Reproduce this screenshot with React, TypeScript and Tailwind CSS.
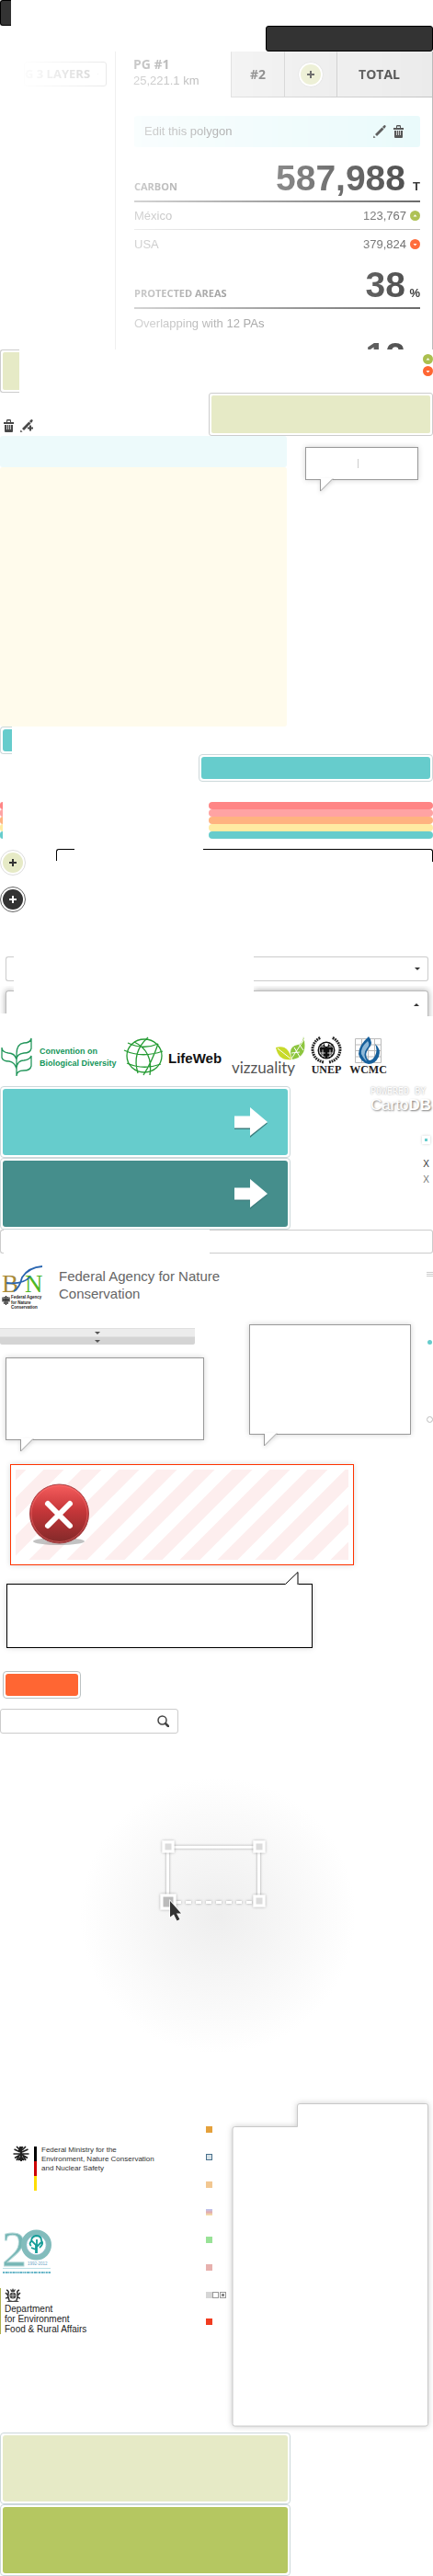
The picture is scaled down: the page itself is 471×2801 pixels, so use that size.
import React from "react";

const stripes = [0, 1, 2, 3, 4, 5, 6, 7, 8, 9, 10, 11];

function Plus({ dark = false }: { dark?: boolean }) {
  return (
    <button
      aria-label="Add"
      className={
        dark
          ? "size-7 rounded-full border border-[#666] bg-white p-0.5"
          : "size-7 rounded-full border border-[#ddd] bg-white p-0.5"
      }
    >
      <svg viewBox="0 0 22 22" className="size-full">
        <circle cx="11" cy="11" r="11" fill={dark ? "#333" : "#e6eac6"} />
        <path d="M7 11h8M11 7v8" stroke={dark ? "#fff" : "#333"} strokeWidth="2" />
      </svg>
    </button>
  );
}

function Trend({ up = false }: { up?: boolean }) {
  return (
    <svg viewBox="0 0 11 11" className="size-[11px] shrink-0">
      <circle cx="5.5" cy="5.5" r="5.5" fill={up ? "#abbf4e" : "#ff6633"} />
      <path d={up ? "M3.5 6.5h4L5.5 4.3z" : "M3.5 5h4L5.5 7.2z"} fill="#fff" />
    </svg>
  );
}

function Trash() {
  return (
    <svg viewBox="0 0 11 14" className="h-3.5 w-[11px]" fill="#484848">
      <path d="M0 3h11v2H0zM3 3V1.2Q3 0 4.200 0h2.600Q8 0 8 1.200V3H7V1.500H4V3zM1 6h9v7q0 1-1 1H2q-1 0-1-1z" />
      <path d="M3.500 6v5M5.500 6v5M7.500 6v5" stroke="#fff" strokeWidth=".7" />
    </svg>
  );
}

function Pencil({ add = false }: { add?: boolean }) {
  return (
    <svg viewBox="0 0 14 14" className="size-3.5" fill="#484848">
      <path d="M2 10 9.500 2.500l2 2L4 12zM10 2l1.500-1.500q1-.8 1.800 0t0 1.800L12 4zM.5 11.500l2 2L0 14z" />
      {add && <path d="M8 9.500h6M11 6.500v6" stroke="#fff" strokeWidth="4" />}
      {add && <path d="M8 9.500h6M11 6.500v6" stroke="#484848" strokeWidth="2" />}
    </svg>
  );
}

function Stat({ label, value, unit }: { label: string; value: string; unit: string }) {
  return (
    <div className="flex items-baseline border-b-2 border-[#666] pb-1">
      <h3 className="grow font-['Open_Sans',sans-serif] text-[11px] font-bold text-[#444]">{label}</h3>
      <span className="text-[39px] leading-10 font-bold text-[#444]">{value}</span>
      <span className="w-4 text-right text-[13px] font-bold text-[#333]">{unit}</span>
    </div>
  );
}

function Bubble({ size, children }: { size: string; children?: React.ReactNode }) {
  return (
    <div className={"relative border border-[#999] bg-white shadow-[0_0_6px_rgba(0,0,0,0.18)] " + size}>
      {children}
      <svg viewBox="0 0 15 15" className="absolute top-full left-[15px] -mt-px size-[15px] drop-shadow-[0_2px_2px_rgba(0,0,0,0.12)]">
        <path d="M.5 0V14L14.500.5V0z" fill="#fff" />
        <path d="M.5 1V14L14 .5" fill="none" stroke="#999" />
      </svg>
    </div>
  );
}

function BigButton({ fill, arrow = false }: { fill: string; arrow?: boolean }) {
  return (
    <button aria-label="Continue" className="block h-[78px] w-full rounded-[4px] border border-[#ccd8da] bg-white p-0.5">
      <span className={"flex size-full items-center justify-end rounded-[3px] pr-[22px] " + fill}>
        {arrow && (
          <svg viewBox="0 0 36 33" className="h-[33px] w-9">
            <path d="M0 11h17V2l19 15.500L17 33v-9H0z" fill="#3f7f7f" />
            <path d="M0 9.500h17V0l19 16-19 15v-8.500H0z" fill="#fff" />
          </svg>
        )}
      </span>
    </button>
  );
}

function InfoPanel() {
  return (
    <section className="flex h-[324px] overflow-hidden [mask-image:linear-gradient(to_right,transparent_4%,black)]">
      <div className="w-[125px] shrink-0 pt-[11px]">
        <button className="ml-[26px] flex h-[27px] w-[90px] items-center justify-end gap-2 rounded-[3px] border border-[#999] pr-2 font-['Open_Sans',sans-serif] text-[13px] font-bold whitespace-nowrap text-[#333]">
          G 3 LAYERS
          <svg viewBox="0 0 6 3" className="h-[3px] w-1.5"><path d="M0 0h6L3 3z" fill="#333" /></svg>
        </button>
      </div>
      <div className="grow border-x border-x-[#bbb]">
        <div className="flex h-[50px] font-['Open_Sans',sans-serif] text-sm font-bold text-[#444]">
          <div className="w-[125px] shrink-0 pt-1 pl-[19px] leading-5">
            PG #1
            <div className="font-['Liberation_Sans',sans-serif] text-[13px] leading-4 font-normal text-[#666]">25,221.1 km</div>
          </div>
          <div className="flex w-[58px] items-center justify-center border border-r-0 border-[#c4c4c4] border-t-transparent bg-[#e9e9e9]">#2</div>
          <div className="flex w-[57px] items-center justify-center border border-r-0 border-[#c4c4c4] border-t-transparent bg-[#e9e9e9]"><Plus /></div>
          <div className="flex grow items-center justify-center border border-r-0 border-[#c4c4c4] border-t-transparent bg-[#ebebeb] pr-3">TOTAL</div>
        </div>
        <div className="pt-5 pr-[13px] pl-[20px] text-[13px] text-[#666]">
          <div className="flex h-[34px] items-center rounded-[3px] bg-[#e9fafb] px-[11px]">
            <span className="grow">Edit this polygon</span>
            <span className="flex gap-2 pr-[7px]"><Pencil /><Trash /></span>
          </div>
          <div className="pt-[14px]"><Stat label="CARBON" value="587,988" unit="T" /></div>
          <div className="flex h-[30px] items-center border-b border-[#bbb]"><span className="grow">México</span><span className="mr-1">123,767</span><Trend up /></div>
          <div className="flex h-[31px] items-center"><span className="grow">USA</span><span className="mr-1">379,824</span><Trend /></div>
          <div className="pt-[9px]"><Stat label="PROTECTED AREAS" value="38" unit="%" /></div>
          <div className="flex h-[31px] items-center">Overlapping with 12 PAs</div>
          <Stat label="" value="12" unit="" />
        </div>
      </div>
    </section>
  );
}

function Globe() {
  return (
    <svg viewBox="0 0 44 43" className="h-[43px] w-11 shrink-0" fill="none" stroke="#259b33" strokeWidth="1.300">
      <ellipse cx="23" cy="21" rx="19" ry="18" />
      <path d="M1 15Q20 24 43 16M4 29Q22 37 41 30M5 7Q22 15 38 8M27 1Q9 17 16 40M12 6Q33 16 29 42M38 8Q31 28 22 42" />
    </svg>
  );
}

function Emblem() {
  return (
    <svg viewBox="0 0 34 30" className="h-[30px] w-[34px]">
      <circle cx="17" cy="15" r="9.500" fill="#111" />
      <g stroke="#fff" strokeWidth=".8" fill="none"><circle cx="17" cy="15" r="7.500" /><path d="M9.500 12h15M9.500 18h15M13 8v14M21 8v14" /></g>
      <path d="M17 9v14M10 13h14" stroke="#111" strokeWidth="2.500" /><circle cx="17" cy="9" r="2" fill="#fff" />
      <path d="M14 28Q2 25 2 13 3 5 11 1M20 28Q32 25 32 13 31 5 23 1" fill="none" stroke="#222" strokeWidth="3" strokeDasharray="1.800 .8" />
    </svg>
  );
}

function Partners() {
  return (
    <section className="flex h-[45px] items-start pl-px">
      <svg viewBox="0 0 34 43" className="mt-px h-[43px] w-[34px] shrink-0" fill="none" stroke="#24975c" strokeWidth="1.300">
        <path d="M17 42V18Q17 7 25 6 32 6 33 1V12Q32 17 25 17 17 18 17 24M17 24Q15 17 8 17 1 16 1 11V22Q2 26 9 26 15 27 17 34M17 33Q18 25 25 25 32 24 33 20V31Q32 36 25 36 17 36 17 42" />
      </svg>
      <div className="mt-[10px] ml-2 w-[91px] shrink-0 text-[9px] leading-[13px] font-bold whitespace-nowrap text-[#14955a]">
        Convention on<br />Biological Diversity
      </div>
      <Globe />
      <div className="mt-[12px] ml-[5px] w-[67px] shrink-0 text-[15px] leading-6 font-bold text-[#111]">LifeWeb</div>
      <div className="relative mt-6 w-[88px] shrink-0 pl-0.5 font-['Lato',sans-serif] text-[17px] leading-5 text-[#555]">
        vizzuality
        <svg viewBox="0 0 32 26" className="absolute -top-6 left-[50px] h-[26px] w-8">
          <path d="M0 12Q14 8 17 25 3 27 0 12" fill="#c8da2a" />
          <path d="M18 25Q12 11 24 9 30 7 30 0 36 22 18 25" fill="#8dc63f" />
          <path d="M2 13 16 24M17 24 31 3M20 12l6 10M25 8l5 7M17 18l9-1" stroke="#fff" />
        </svg>
      </div>
      <div className="w-[34px] shrink-0 text-center font-['Liberation_Serif',serif] text-xs leading-[13px] font-bold text-[#222]"><Emblem />UNEP</div>
      <div className="ml-2 w-[41px] shrink-0 text-center font-['Liberation_Serif',serif] text-xs leading-[13px] font-bold text-[#222]">
        <svg viewBox="0 0 41 30" className="h-[30px] w-[41px]">
          <path d="M6.500 2.500h28v26h-28zM6 9h29M6 15.500h29M6 22h29M13.500 2v27M20.500 2v27M27.500 2v27" fill="none" stroke="#bbb" />
          <path d="M21 0Q27 7 21 13 16 19 20 25 24 28 28 21 31 15 28 8 35 14 32 22 28 30 21 30 12 28 10 19 10 10 21 0" fill="#17609b" />
          <path d="M20 5Q12 12 13 19 16 25 19 27 14 19 19 13 23 9 20 5" fill="#8fb9d8" />
        </svg>
        WCMC
      </div>
    </section>
  );
}

function DrawArea() {
  return (
    <svg viewBox="0 0 300 300" className="block size-[300px]">
      <defs>
        <radialGradient id="glow"><stop offset="0" stopColor="#eee" /><stop offset="1" stopColor="#fff" /></radialGradient>
        <filter id="soft" filterUnits="userSpaceOnUse" x="80" y="60" width="130" height="95"><feDropShadow dx="0" dy="0" stdDeviation="1.500" floodOpacity=".35" /></filter>
      </defs>
      <circle cx="150" cy="150" r="150" fill="url(#glow)" />
      <g filter="url(#soft)" stroke="#fff" strokeWidth="3" fill="none">
        <path d="M95.500 134V75.500H194.500V134" />
        <path d="M104 135.500h84" strokeDasharray="6 5" />
      </g>
      {[[96, 75], [195, 75], [195, 134]].map(([x, y]) => (
        <rect key={x + "-" + y} x={x - 5} y={y - 5} width="10" height="10" fill="#dcdcdc" stroke="#fff" strokeWidth="3" filter="url(#soft)" />
      ))}
      <rect x="89" y="128" width="14" height="14" fill="#bbb" stroke="#fff" strokeWidth="3" filter="url(#soft)" />
      <path d="M98 134v17.500l4-3 3.500 7 3-1.500-3.500-6.500h5z" fill="#333" stroke="#fff" strokeWidth="1.500" paintOrder="stroke" />
    </svg>
  );
}

function Swatches() {
  const colors = [
    "bg-[#e5a13b]",
    "bg-[#d8e2e7] border border-[#49718d]",
    "bg-[#f2c791]",
    "bg-linear-to-b from-[#b7c3f4] via-[#e3adad] to-[#f7e5a7]",
    "bg-[#99e297]",
    "bg-[#e7b1ae]",
  ];
  return (
    <div className="flex w-[29px] shrink-0 flex-col gap-[22px] pt-[25px]">
      {colors.map((c) => <span key={c} className={"size-[7px] " + c + " mb-px"} />)}
      <span className="flex h-[7px]">
        <span className="size-[7px] bg-[#d6d6d6]" />
        <span className="mr-px size-[7px] border border-[#999]" />
        <span className="size-[7px] border border-[#999] p-px"><span className="block size-full bg-[#888]" /></span>
      </span>
      <span className="size-[7px] bg-[#f13c20]" />
    </div>
  );
}

function Crest({ eagle = false }: { eagle?: boolean }) {
  return eagle ? (
    <svg viewBox="0 0 18 18" className="size-[18px]">
      <path d="M9 1v16M6 16l3-4 3 4M9 5H7l1-3h2z" fill="#222" stroke="#222" strokeWidth="2" />
      <path d="M8 5 4 1M8 7 1.500 4M8 9H.5M8 10l-6 3.500M7 11l-3 5M10 5l4-4M10 7l6.500-3M10 9h7.500M10 10l6 3.500M11 11l3 5" stroke="#222" strokeWidth="1.700" />
    </svg>
  ) : (
    <svg viewBox="0 0 18 15" className="h-[15px] w-[18px]">
      <g fill="#444"><circle cx="9" cy="8" r="3.500" /><path d="M7 4l-1-3 2 1 1-2 1 2 2-1-1 3zM2 15h14l-3-2-4 1-4-1z" /></g>
      <path d="M5 13Q3 9 4 6T2 2M1 5l3 3M1 11q2 0 3-2M13 13q2-4 1-7T16 2M17 5l-3 3M17 11q-2 0-3-2" fill="none" stroke="#333" strokeWidth="1.600" />
      <path d="M6 8h6M9 5v6" stroke="#ddd" strokeWidth=".7" />
    </svg>
  );
}

export default function App() {
  return (
    <main className="w-full overflow-hidden bg-white font-['Liberation_Sans',Arial,sans-serif] text-[#666]">
      <div className="h-7 w-3 rounded-l-[3px] border border-r-0 border-black bg-[#333]" />
      <div className="ml-auto h-7 w-[182px] rounded-[3px] border border-black bg-[#333]" />
      <InfoPanel />

      <section className="flex items-start justify-between">
        <div className="h-[47px] w-[21px] rounded-l-[3px] border border-r-0 border-[#ccc] py-0.5 pl-0.5">
          <div className="h-full rounded-l-[2px] bg-[#e6eac6]" />
        </div>
        <div className="flex flex-col gap-0.5 pt-[5px]"><Trend up /><Trend /></div>
      </section>
      <section className="flex items-end justify-between">
        <div className="flex gap-[7px] pb-1 pl-1"><Trash /><Pencil add /></div>
        <div className="h-[47px] w-[244px] rounded-[3px] border border-[#ccc] p-0.5"><div className="h-full rounded-[2px] bg-[#e6eac6]" /></div>
      </section>

      <section className="flex">
        <div className="w-[312px] shrink-0">
          <div className="h-[34px] rounded-[3px] bg-[#edfafb]" />
          <div className="h-[282px] rounded-[3px] bg-[#fffbec]" />
        </div>
        <div className="pt-3 pl-5">
          <Bubble size="h-9 w-[123px]"><div className="mx-auto mt-3 h-2.5 w-px -translate-x-1 bg-[#ccc]" /></Bubble>
        </div>
      </section>

      <div className="h-[30px] w-[13px] rounded-l-[4px] border border-r-0 border-[#ccd8da] py-0.5 pl-0.5"><div className="h-full rounded-l-[3px] bg-[#66cccc]" /></div>
      <div className="ml-auto h-[30px] w-[255px] rounded-[4px] border border-[#ccd8da] p-0.5"><div className="h-full rounded-[3px] bg-[#66cccc]" /></div>

      <section className="mt-[22px]">
        {["bg-[#ff8585]", "bg-[#ffa3a3]", "bg-[#ffb380]", "bg-[#ffeba3]", "bg-[#66cccc]"].map((c) => (
          <div key={c} className="flex h-2 justify-between">
            <div className={"w-[3px] rounded-l-full " + c} />
            <div className={"w-[244px] rounded-full " + c} />
          </div>
        ))}
      </section>

      <section className="mt-[11px] flex items-start">
        <div className="mt-px flex w-[61px] flex-col gap-3"><Plus /><Plus dark /></div>
        <div className="h-[13px] w-5 rounded-tl-[3px] border-t border-l border-black" />
        <div className="ml-auto h-[14px] w-[250px] rounded-tr-[3px] border-t border-r border-black" />
      </section>

      <section className="mt-12 flex justify-between pr-[5px] pl-1.5">
        <div className="h-[27px] w-[9px] rounded-l-[3px] border border-r-0 border-[#ccc]" />
        <label className="relative block w-[190px]">
          <select aria-label="Options" className="block h-[27px] w-full appearance-none rounded-r-[3px] border border-l-0 border-[#ccc] bg-white" />
          <svg viewBox="0 0 6 3" className="absolute top-3 right-[9px] h-[3px] w-1.5"><path d="M0 0h6L3 3z" fill="#333" /></svg>
        </label>
      </section>
      <section className="mt-[5px] flex items-start justify-between">
        <div className="h-[30px] w-[15px] overflow-hidden pt-[5px] pl-1.5">
          <div className="h-9 rounded-tl-[3px] border-t border-l border-[#bbb] shadow-[0_0_7px_rgba(0,0,0,0.35)]" />
        </div>
        <div className="h-[33px] w-[195px] overflow-hidden pt-[5px] pr-[5px]">
          <div className="flex h-9 justify-end rounded-tr-[3px] border-t border-r border-[#bbb] pt-[13px] pr-[9px] shadow-[0_0_7px_rgba(0,0,0,0.35)]">
            <svg viewBox="0 0 6 3" className="h-[3px] w-1.5"><path d="M0 3h6L3 0z" fill="#333" /></svg>
          </div>
        </div>
      </section>

      <div className="pt-[22px]"><Partners /></div>

      <section className="mt-[9px] flex justify-between">
        <div className="w-[316px] shrink-0">
          <BigButton fill="bg-[#66cccc]" arrow />
          <BigButton fill="bg-[#458e8c]" arrow />
        </div>
        <div className="flex w-[68px] flex-col text-white">
          <span className="font-['DejaVu_Sans_Mono',monospace] text-[10px] leading-[11px] [text-shadow:0_0_2px_#999]">POWERED BY</span>
          <span className="text-[17px] leading-5 [text-shadow:1px_1px_2px_#777]">Carto<b>DB</b></span>
          <span className="mt-[23px] mr-[3px] size-[9px] self-end bg-white p-[3px] shadow-[0_0_3px_#ccc]"><span className="block size-full bg-[#66cccc]" /></span>
          <button className="mt-[13px] mr-1 self-end text-[10px] leading-[17px] text-[#333]">X</button>
          <button className="mr-1 self-end text-[10px] leading-[17px] text-[#777]">X</button>
        </div>
      </section>
      <section className="flex justify-between">
        <div className="h-[26px] w-1 rounded-l-[3px] border border-r-0 border-[#ccc]" />
        <input aria-label="Text" className="h-[26px] w-[243px] rounded-r-[3px] border border-l-0 border-[#ccc]" />
      </section>

      <section className="flex h-[77px] items-start pt-2 pl-0.5">
        <svg viewBox="0 0 46 54" className="h-[54px] w-[46px] overflow-visible">
          <text x="0" y="34" fontFamily="Liberation Serif" fontSize="27" fill="#a98a38">B</text>
          <text x="25" y="34" fontFamily="Liberation Serif" fontSize="27" fill="#4eb724">N</text>
          <path d="M44 6Q29 7 22 18 19 30 13 33M5 24Q23 26 31 17" fill="none" stroke="#2965b0" strokeWidth="1.800" />
          <g fill="#222" fontFamily="Liberation Sans" fontSize="4.500" fontWeight="bold"><text x="10" y="41">Federal Agency</text><text x="10" y="46.500">for Nature</text><text x="10" y="52">Conservation</text></g>
          <path d="M4.500 38v10M1 39.500v5M2.800 39v8M6.200 39v8M8 39.500v5M.5 42.500h8" stroke="#222" strokeWidth="1.200" />
        </svg>
        <p className="mt-[7px] ml-4 w-48 text-[15px] leading-[19px]">Federal Agency for Nature Conservation</p>
        <svg viewBox="0 0 7 6" className="mt-3 ml-auto h-1.5 w-[7px]"><path d="M0 .5h7M0 2.500h7M0 4.500h7" stroke="#ccc" /></svg>
      </section>

      <section className="flex h-[152px] items-start">
        <div className="w-[271px] shrink-0 pt-1">
          {["bg-[#ececec]", "bg-[#d4d4d4] rounded-b-[2px]"].map((c) => (
            <div key={c} className={"flex h-[9px] w-[212px] items-center justify-center border-t border-[#e0e0e0] " + c}>
              <svg viewBox="0 0 6 3" className="h-[3px] w-1.5"><path d="M0 0h6L3 3z" fill="#555" /></svg>
            </div>
          ))}
          <div className="pt-[14px] pl-1.5"><Bubble size="h-[90px] w-[216px]" /></div>
        </div>
        <Bubble size="h-[120px] w-[176px] shrink-0" />
        <div className="ml-auto flex flex-col items-center gap-[78px] pt-[17px]">
          <span className="size-[5px] rounded-full bg-[#66cccc]" />
          <span className="size-[7px] rounded-full border border-[#bbb]" />
        </div>
      </section>

      <section className="ml-[11px] h-[110px] w-[374px] border border-[#ff3300] bg-white p-[5px] shadow-[0_0_6px_rgba(0,0,0,0.15)]">
        <svg viewBox="0 0 362 98" className="block size-full">
          <defs><linearGradient id="red" x2="0" y2="1"><stop stopColor="#f65d5d" /><stop offset=".45" stopColor="#c53639" /><stop offset="1" stopColor="#812929" /></linearGradient></defs>
          {stripes.map((i) => (
            <path key={i} d="M71.500 0h22l-98 98h-22z" transform={`translate(${(i - 2) * 41} 0)`} fill="#fdeeee" />
          ))}
          <ellipse cx="47" cy="78" rx="28" ry="4" fill="#777" opacity=".45" />
          <circle cx="47.500" cy="48" r="32" fill="url(#red)" stroke="#a94346" />
          <circle cx="47.500" cy="48" r="30.500" fill="none" stroke="#ff7777" opacity=".5" />
          <path d="M35 37 59 61M59 37 35 61" stroke="#fff" strokeWidth="6" strokeLinecap="round" />
        </svg>
      </section>

      <section className="relative mt-5 ml-[7px] h-[70px] w-[333px] border border-black bg-white shadow-[0_0_6px_rgba(0,0,0,0.15)]">
        <svg viewBox="0 0 15 15" className="absolute right-[14px] bottom-full -mb-px size-[15px]">
          <path d="M0 15V14L14.500 0V15z" fill="#fff" /><path d="M.5 13.500 14 .5V14" fill="none" stroke="#000" />
        </svg>
      </section>

      <button aria-label="Action" className="mt-[25px] ml-[3px] block h-[30px] w-[85px] rounded-[4px] border border-[#bbc2c3] p-0.5"><span className="block size-full rounded-[3px] bg-[#ff6633]" /></button>
      <div className="relative mt-[11px] w-[194px]">
        <input aria-label="Search" className="block h-[27px] w-full rounded-[3px] border border-[#ccc] pr-7 pl-2" />
        <svg viewBox="0 0 13 13" className="absolute top-[7px] right-[10px] size-[13px]" fill="none" stroke="#444"><circle cx="5.500" cy="5.500" r="4.500" strokeWidth="1.500" /><path d="M9 9l3 3" strokeWidth="2.500" strokeLinecap="round" /></svg>
      </div>

      <section className="mt-12 flex justify-center pl-0.5"><DrawArea /></section>

      <section className="mt-[54px] flex h-[358px]">
        <div className="flex w-[224px] shrink-0 flex-col items-start pt-[46px]">
          <div className="flex pl-[14px] text-[8px] leading-[10px] text-[#333]">
            <Crest eagle />
            <div className="mt-px ml-[5px] flex h-12 w-[3px] flex-col">
              <span className="grow bg-black" /><span className="grow bg-[#c00]" /><span className="grow bg-[#fd0]" />
            </div>
            <p className="ml-[5px] whitespace-nowrap">Federal Ministry for the<br />Environment, Nature Conservation<br />and Nuclear Safety</p>
          </div>
          <svg viewBox="0 0 55 49" className="mt-[42px] ml-[3px] h-[49px] w-[55px] overflow-visible">
            <text x="-1" y="40" fontFamily="Liberation Serif" fontSize="54" fill="#75b6b5" stroke="#b8d9d9" strokeWidth=".8">2</text>
            <circle cx="36.500" cy="17" r="13.500" fill="#fff" stroke="#82bcbc" strokeWidth="6" />
            <circle cx="36.500" cy="17" r="10.500" fill="none" stroke="#b6c7e7" strokeDasharray="1 1" />
            <path d="M36 26V17L31 12M37 26V11M37 19l5-5M31 18q-3-2 0-5 0-5 5-6 6 0 6 5 3 4-2 8M31 20l5 2" fill="none" stroke="#159d98" strokeWidth="1.800" />
            <text x="27" y="39" fontFamily="Liberation Sans" fontSize="4.500" fill="#6ca6c6">1992-2012</text>
            <path d="M0 42.500h52" stroke="#bde0e5" />
            <path d="M0 47h52" stroke="#68b6c8" strokeWidth="2" strokeDasharray="2 .7 3 .5 1 .6" />
          </svg>
          <div className="mt-[15px] border-l border-[#aeb04d] pl-1 text-[10px] leading-[11px] text-[#222]">
            <Crest />
            <p className="pt-0.5">Department<br />for Environment<br />Food &amp; Rural Affairs</p>
          </div>
        </div>
        <Swatches />
        <svg viewBox="0 0 214 352" className="h-[352px] w-[214px] overflow-visible drop-shadow-[0_0_3px_rgba(0,0,0,0.2)]">
          <path d="M70.500 25.500V3Q70.500.5 73 .5H210.500Q212.500.5 212.500 3V348.500Q212.500 351 210 351H2.500Q0 351 0 348.500V28Q0 25.500 2.500 25.500z" fill="#fff" stroke="#c8c8c8" />
        </svg>
      </section>

      <section className="w-[316px]">
        <BigButton fill="bg-[#e6eac6]" />
        <BigButton fill="bg-[#b5c761]" />
      </section>
    </main>
  );
}
